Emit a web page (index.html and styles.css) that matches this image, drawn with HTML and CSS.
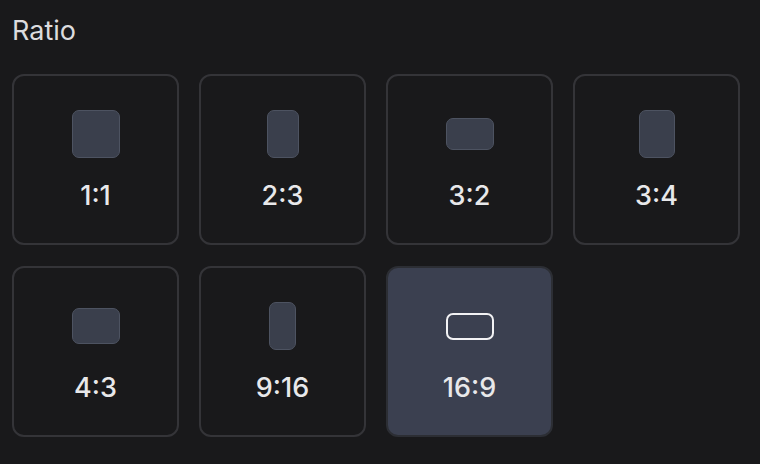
FILE: index.html
```html
<!DOCTYPE html>
<html lang="en">
<head>
    <title>Ratio</title>
    <meta charset="utf-8">
    <meta name="viewport" content="width=device-width, initial-scale=1.0">
    <link rel="stylesheet" href="styles.css">
</head>
<body>
    <section class="ratio-panel">
        <h2 class="panel-title">Ratio</h2>

        <div class="ratio-grid">
            <button class="ratio-card">
                <span class="shape-box"><span class="shape shape-1-1"></span></span>
                <span class="ratio-label">1:1</span>
            </button>
            <button class="ratio-card">
                <span class="shape-box"><span class="shape shape-2-3"></span></span>
                <span class="ratio-label">2:3</span>
            </button>
            <button class="ratio-card">
                <span class="shape-box"><span class="shape shape-3-2"></span></span>
                <span class="ratio-label">3:2</span>
            </button>
            <button class="ratio-card">
                <span class="shape-box"><span class="shape shape-3-4"></span></span>
                <span class="ratio-label">3:4</span>
            </button>
            <button class="ratio-card">
                <span class="shape-box"><span class="shape shape-4-3"></span></span>
                <span class="ratio-label">4:3</span>
            </button>
            <button class="ratio-card">
                <span class="shape-box"><span class="shape shape-9-16"></span></span>
                <span class="ratio-label">9:16</span>
            </button>
            <!-- Selected option -->
            <button class="ratio-card selected">
                <span class="shape-box"><span class="shape shape-16-9"></span></span>
                <span class="ratio-label">16:9</span>
            </button>
        </div>
    </section>
</body>
</html>
```

FILE: styles.css
```css
/* General styles */
body {
    margin: 0;
    padding: 0;
    background: #19191b;
    font-family: 'Inter', 'Roboto', sans-serif;
    color: #e6e6e8;
}

/* Panel */
.ratio-panel {
    padding: 12px 12px 0 12px;
}

.panel-title {
    margin: 0 0 24px 0;
    font-size: 27px;
    font-weight: 400;
    line-height: 38px;
    color: #dcdcde;
}

/* Grid of ratio cards */
.ratio-grid {
    display: grid;
    grid-template-columns: repeat(4, 1fr);
    column-gap: 20px;
    row-gap: 21px;
    width: 728px;
}

.ratio-card {
    display: flex;
    flex-direction: column;
    align-items: center;
    gap: 22px;
    padding: 34px 0 31px 0;
    background: #19191b;
    border: 2px solid #343438;
    border-radius: 12px;
    font-family: inherit;
    color: inherit;
    cursor: pointer;
}

.ratio-card.selected {
    background: #3b4050;
    border-color: #2c2e34;
}

.shape-box {
    display: flex;
    align-items: center;
    justify-content: center;
    width: 48px;
    height: 48px;
}

.shape {
    box-sizing: border-box;
    background: #3a3f4c;
    border: 1px solid #4d5361;
    border-radius: 7px;
}

.shape-1-1 { width: 48px; height: 48px; }
.shape-2-3 { width: 32px; height: 48px; }
.shape-3-2 { width: 48px; height: 32px; }
.shape-3-4 { width: 36px; height: 48px; }
.shape-4-3 { width: 48px; height: 36px; }
.shape-9-16 { width: 27px; height: 48px; }
.shape-16-9 { width: 48px; height: 27px; }

.selected .shape {
    background: transparent;
    border: 2px solid #f2f2f4;
}

.ratio-label {
    font-size: 27px;
    font-weight: 500;
    line-height: 32px;
    color: #e8e8ea;
}
```
